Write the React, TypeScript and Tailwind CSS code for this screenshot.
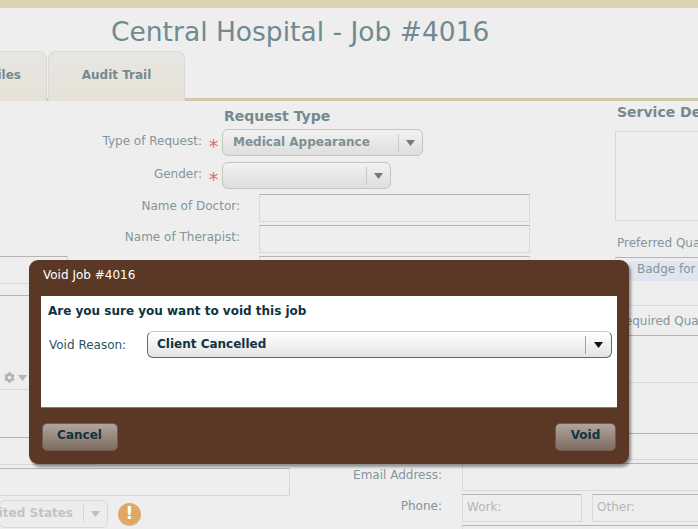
import React from "react";
import { FaCog } from "react-icons/fa";

const font = "font-['DejaVu_Sans',Verdana,sans-serif]";
const inputBox = "border border-[#d8d8d8] border-t-[#b4b4b4] bg-[#eeeeee]";

function Caret({ color, className = "" }: { color: string; className?: string }) {
  return (
    <svg width="9" height="6" viewBox="0 0 9 6" className={className}>
      <path d="M0 0h9L4.5 6z" fill={color} />
    </svg>
  );
}

function SelectBox({ width, label }: { width: string; label?: string }) {
  return (
    <div className={`${width} h-[27px] flex items-center rounded-[6px] border border-[#c4c4c4] bg-gradient-to-b from-[#f2f2f2] to-[#dedede]`}>
      <span className="flex-1 pl-[10px] pb-[2px] text-[12px] font-bold text-[#7e8f96] leading-none">{label}</span>
      <span className="h-[18px] w-px bg-[#c9c9c9]" />
      <span className="w-[23px] flex justify-center">
        <Caret color="#6e7c80" />
      </span>
    </div>
  );
}

function Field({ label }: { label: string }) {
  return (
    <div className="flex items-center">
      <span className="w-[145px] pb-[5px] text-right text-[12px] text-[#84959c] whitespace-nowrap">{label}</span>
      <div className={`${inputBox} ml-[19px] w-[271px] h-[28px]`} />
    </div>
  );
}

function RequiredRow({ label, children }: { label: string; children: React.ReactNode }) {
  return (
    <div className="flex items-center">
      <span className="w-[107px] pb-[3px] text-right text-[12px] text-[#84959c] whitespace-nowrap">{label}</span>
      <span className="w-[20px] pl-[3px] text-center text-[19px] leading-none text-[#e56a6a] pt-[7px]">*</span>
      {children}
    </div>
  );
}

function DialogButton({ label, width, className = "" }: { label: string; width: string; className?: string }) {
  return (
    <button className={`${width} ${className} h-[28px] pb-[5px] rounded-[5px] border border-[#6f5b50] bg-gradient-to-b from-[#b0a59e] to-[#7f6c61] text-[12px] font-bold text-[#0f3440] leading-none`}>
      {label}
    </button>
  );
}

export default function App() {
  return (
    <div className={`${font} relative w-[698px] h-[529px] overflow-hidden bg-[#eeeeee]`}>
      <div className="h-2 bg-[#dcd3b3]" />
      <h1 className="h-[43px] pl-[111px] pt-[8px] text-[26.5px] leading-[32px] text-[#718990]">Central Hospital - Job #4016</h1>

      {/* tabs */}
      <div className="h-[50px] flex gap-px items-end border-b-[3px] border-[#d0c9a8]">
        <div className="w-[47px] h-[50px] -mb-[3px] flex justify-end rounded-tr-[8px] border border-l-0 border-b-0 border-[#d9d9d9] bg-gradient-to-b from-[#e8e6e4] to-[#e6e2d6] pt-[14px] pr-[25px] text-[12px] font-bold text-[#75898f]">
          <span className="shrink-0">iles</span>
        </div>
        <div className="w-[137px] h-[50px] -mb-[3px] rounded-t-[8px] border border-b-0 border-[#d9d9d9] bg-gradient-to-b from-[#e8e6e4] to-[#e6e2d6] pt-[14px] text-center text-[12px] font-bold text-[#75898f]">
          Audit Trail
        </div>
      </div>

      {/* upper form */}
      <div className="flex h-[361px]">
        <div className="w-[96px] shrink-0 pt-[155px] -ml-px">
          <div className={`${inputBox} w-[69px] h-[28px]`} />
          <div className={`${inputBox} mt-[11px] w-[95px] h-[95px] pt-[76px] pl-[4px] flex items-start gap-[3px]`}>
            <FaCog size={11} color="#b4b4b4" />
            <Caret color="#b4b4b4" className="mt-[3px]" />
          </div>
          <div className={`${inputBox} mt-[47px] w-[95px] h-[28px]`} />
        </div>

        <div className="w-[521px] shrink-0">
          <div className="pl-[129px] pt-[6px] text-[14px] leading-[18px] font-bold text-[#75898f]">Request Type</div>
          <div className="mt-[4px]">
            <RequiredRow label="Type of Request:">
              <SelectBox width="w-[201px]" label="Medical Appearance" />
            </RequiredRow>
          </div>
          <div className="mt-[6px]">
            <RequiredRow label="Gender:">
              <SelectBox width="w-[169px]" />
            </RequiredRow>
          </div>
          <div className="mt-[5px] flex flex-col gap-[3px]">
            <Field label="Name of Doctor:" />
            <Field label="Name of Therapist:" />
            <Field label="" />
          </div>
        </div>

        <div className="flex-1 pt-[2px] pl-px">
          <div className="text-[14px] leading-[18px] font-bold text-[#75898f] whitespace-nowrap">Service Details</div>
          <div className={`${inputBox} border-t-[#d8d8d8] -ml-[2px] mt-[10px] w-[100px] h-[90px]`} />
          <div className="mt-[14px] text-[12px] leading-[16px] text-[#84959c] whitespace-nowrap">Preferred Qualifications</div>
          <div className={`${inputBox} -ml-[2px] mt-[6px] w-[100px] h-[49px] pl-[9px] pt-[3px]`}>
            <div className="h-[20px] pl-[12px] rounded-[8px] bg-[#dfe5ee] text-[12px] leading-[17px] text-[#84959c] whitespace-nowrap">Badge for all</div>
          </div>
          <div className="mt-[7px] text-[12px] leading-[16px] text-[#84959c] whitespace-nowrap">Required Qualifications</div>
          <div className={`${inputBox} -ml-[2px] mt-[6px] w-[100px] h-[48px]`} />
          <div className={`${inputBox} -ml-[2px] mt-[50px] w-[100px] h-[27px]`} />
        </div>
      </div>

      {/* lower form */}
      <div className="flex">
        <div className="w-[353px] shrink-0 -ml-px">
          <div className={`${inputBox} mt-[6px] w-[291px] h-[28px]`} />
          <div className="mt-[4px] flex items-center">
            <div className="w-[109px] h-[28px] flex items-center rounded-[6px] border border-[#d8d8d8] bg-[#ededed]">
              <span className="flex-1 min-w-0 flex justify-end pr-[10px] pb-[2px] text-[12px] font-bold text-[#bfc5c7] leading-none whitespace-nowrap">
                <span className="shrink-0">United States</span>
              </span>
              <span className="h-[18px] w-px bg-[#d4d4d4]" />
              <span className="w-[23px] shrink-0 flex justify-center">
                <Caret color="#b9c0c2" />
              </span>
            </div>
            <div className="ml-[10px] w-[23px] h-[23px] rounded-full bg-[#e0a862] border-b border-[#c9c9c9] flex items-center justify-center text-[17px] font-bold text-white leading-none">
              !
            </div>
          </div>
        </div>
        <div className="flex-1 mt-[1px] flex flex-col gap-[3px]">
          <div className="flex items-center">
            <span className="w-[90px] pb-[5px] text-right text-[12px] text-[#84959c]">Email Address:</span>
            <div className={`${inputBox} ml-[20px] w-[240px] h-[28px]`} />
          </div>
          <div className="flex items-center">
            <span className="w-[90px] pb-[4px] text-right text-[12px] text-[#84959c]">Phone:</span>
            <div className={`${inputBox} ml-[20px] w-[120px] h-[28px] pl-[4px] text-[12px] leading-[24px] text-[#b5b5b5]`}>Work:</div>
            <div className={`${inputBox} ml-[10px] w-[110px] h-[28px] pl-[4px] text-[12px] leading-[24px] text-[#b5b5b5]`}>Other:</div>
          </div>
          <div className="pl-[110px]">
            <div className={`${inputBox} w-[240px] h-[28px]`} />
          </div>
        </div>
      </div>

      {/* void dialog */}
      <div className="absolute left-[29px] top-[260px] w-[600px] h-[204px] rounded-[9px] bg-[#5b3825] shadow-[2px_3px_3px_rgba(0,0,0,0.4)] px-[12px]">
        <div className="h-[36px] pl-[2px] pt-[7px] text-[12px] leading-[16px] text-white">Void Job #4016</div>
        <div className="h-[112px] bg-white pl-[7px] pr-[5px] pt-[6px] border-b border-[#8a7568]">
          <div className="text-[12px] leading-[18px] font-bold text-[#0f3440]">Are you sure you want to void this job</div>
          <div className="mt-[11px] flex items-center">
            <span className="w-[99px] shrink-0 pl-[1px] text-[12px] text-[#2d5360]">Void Reason:</span>
            <div className="w-[465px] shrink-0 h-[27px] flex items-center rounded-[6px] border border-[#666666] border-t-[#c8c8c8] bg-gradient-to-b from-white to-[#e4e4e4]">
              <span className="flex-1 pl-[9px] pb-[2px] text-[12px] font-bold text-[#0f3440] leading-none">Client Cancelled</span>
              <span className="h-[18px] w-px bg-[#a0a0a0]" />
              <span className="w-[25px] flex justify-center">
                <Caret color="#111111" />
              </span>
            </div>
          </div>
        </div>
        <div className="mt-[15px] flex justify-between pl-px pr-px">
          <DialogButton label="Cancel" width="w-[76px]" className="pr-[1px]" />
          <DialogButton label="Void" width="w-[61px]" />
        </div>
      </div>
    </div>
  );
}
